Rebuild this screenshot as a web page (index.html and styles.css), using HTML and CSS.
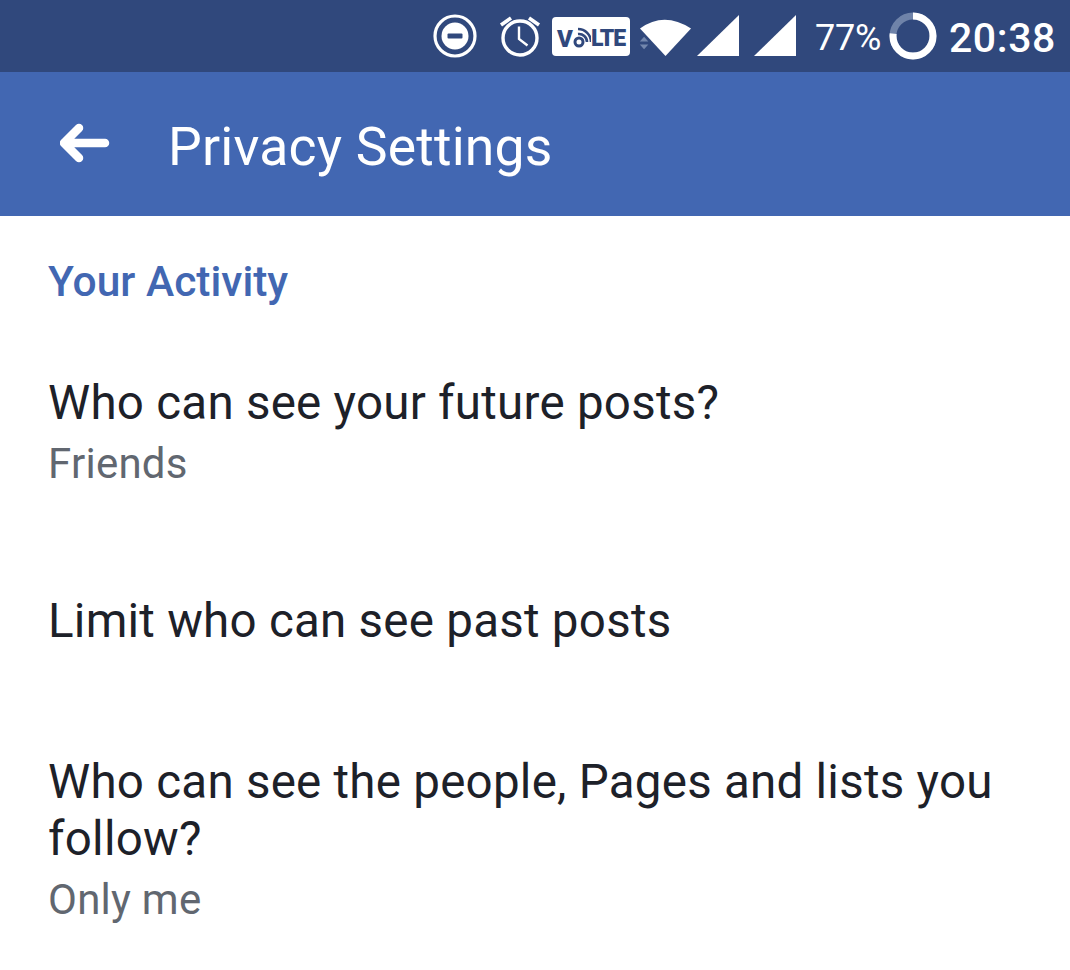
FILE: index.html
```html
<!DOCTYPE html>
<html lang="en">
<head>
<meta charset="utf-8">
<title>Privacy Settings</title>
<link rel="stylesheet" href="styles.css">
</head>
<body>
<div class="phone">
  <div class="status">
    <svg class="i-dnd" viewBox="0 0 44 44" width="44" height="44"><circle cx="22" cy="22" r="20" fill="none" stroke="#fff" stroke-width="3.2"/><circle cx="22" cy="22" r="13.5" fill="#fff"/><rect x="14.5" y="19.5" width="15" height="5" rx="1" fill="#30487c"/></svg>
    <svg class="i-alarm" viewBox="0 0 44 44" width="44" height="44"><circle cx="22" cy="24" r="17" fill="none" stroke="#fff" stroke-width="3.4"/><path d="M21 12.500V25l8.500 6.500" fill="none" stroke="#fff" stroke-width="2.400"/><path d="M3 11 13 4M41 11 31 4" fill="none" stroke="#fff" stroke-width="3.600"/></svg>
    <span class="volte"><b class="vo">V</b><svg class="vo-o" viewBox="0 0 18 28" width="18" height="28"><circle cx="6" cy="19" r="4" fill="none" stroke="#30487c" stroke-width="3"/><path d="M5 11a8 8 0 0 1 9 8M5 6a13 13 0 0 1 13 13" fill="none" stroke="#30487c" stroke-width="2.600"/></svg><b class="lte">LTE</b></span>
    <svg class="i-wifi" viewBox="0 0 56 44" width="56" height="44"><path d="M2 14.500Q26-3 53 14.500L27.500 42Z" fill="#fff"/><path d="M4 28h9l-4.500-5zM4 31h9l-4.500 5z" fill="#7387ad" transform="translate(-2 1) scale(.95)"/></svg>
    <svg class="i-sig1" viewBox="0 0 44 44" width="44" height="44"><path d="M1 42 43 1v41z" fill="#fff"/></svg>
    <svg class="i-sig2" viewBox="0 0 44 44" width="44" height="44"><path d="M1 42 43 1v41z" fill="#fff"/></svg>
    <span class="pct">77%</span>
    <svg class="i-batt" viewBox="0 0 48 48" width="48" height="48"><circle cx="24" cy="24" r="20" fill="none" stroke="#6f83a9" stroke-width="7"/><circle cx="24" cy="24" r="20" fill="none" stroke="#fff" stroke-width="7" pathLength="100" stroke-dasharray="77 23" transform="rotate(-90 24 24)"/></svg>
    <span class="time">20:38</span>
  </div>
  <header class="bar">
    <svg class="back" viewBox="0 0 50 40" width="50" height="40"><path d="M19 5 4 20l15 15M5 20h40" fill="none" stroke="#fff" stroke-width="8.500" stroke-linecap="round" stroke-linejoin="round"/></svg>
    <h1>Privacy Settings</h1>
  </header>
  <main class="list">
    <h2>Your Activity</h2>
    <section class="item first">
      <p class="label">Who can see your future posts?</p>
      <p class="sub">Friends</p>
    </section>
    <section class="item second">
      <p class="label">Limit who can see past posts</p>
    </section>
    <section class="item third">
      <p class="label">Who can see the people, Pages and lists you follow?</p>
      <p class="sub">Only me</p>
    </section>
  </main>
</div>
</body>
</html>
```
FILE: styles.css
```css
* { box-sizing: border-box; margin: 0; padding: 0; }
html, body { background: #fff; }
body { font-family: Roboto, "Liberation Sans", sans-serif; overflow: hidden; }
.phone { width: 1070px; height: 970px; overflow: hidden; }

.status {
  height: 72px;
  background: #30487c;
  display: flex;
  align-items: center;
  justify-content: flex-end;
  color: #fff;
  padding-right: 14px;
}
.status svg { flex: none; display: block; }
.i-dnd { margin-right: 21px; }
.i-alarm { margin-right: 10px; }
.volte {
  width: 78px;
  height: 39px;
  background: #fff;
  border-radius: 4px;
  display: flex;
  align-items: center;
  color: #30487c;
  line-height: 1;
  padding-left: 5px;
  margin-right: 8px;
  margin-top: 1px;
}
.volte b { font-weight: 900; font-size: 24px; }
.volte .lte { font-size: 23px; letter-spacing: -1.2px; margin-top: 4px; }
.volte .vo { margin-top: 4px; }
.i-wifi { margin-right: 2px; }
.i-sig1 { margin-right: 13px; margin-top: -1px; }
.i-sig2 { margin-right: 18px; margin-top: -1px; }
.pct { font-size: 36px; line-height: 1; margin-right: 8px; letter-spacing: -.3px; margin-top: 3px; }
.i-batt { margin-right: 12px; }
.time { font-size: 41px; line-height: 1; font-weight: 500; letter-spacing: .6px; margin-top: 4px; }

.bar {
  height: 144px;
  background: #4267b2;
  display: flex;
  align-items: center;
  color: #fff;
  padding-left: 60px;
}
.back { flex: none; margin-right: 58px; margin-top: -2px; }
.bar h1 { font-size: 53.5px; font-weight: 400; line-height: 1; letter-spacing: .2px; margin-top: 6px; }

.list { padding: 0 48px; color: #1d2129; }
.list h2 {
  font-size: 42.5px;
  font-weight: 500;
  line-height: 48px;
  color: #4267b2;
  padding-top: 42px;
  box-sizing: content-box;
}
.label { font-size: 47.5px; line-height: 57px; letter-spacing: .25px; }
.sub { font-size: 42px; line-height: 48px; color: #616770; margin-top: 8px; letter-spacing: .25px; }
.first { margin-top: 69px; }
.second { margin-top: 105px; }
.third { margin-top: 104px; }
```
